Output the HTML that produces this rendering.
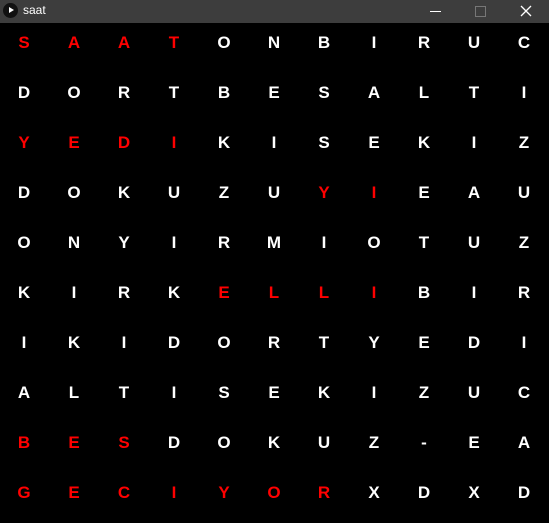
<!DOCTYPE html>
<html><head><style>
body{margin:0;width:549px;height:523px;background:#000;overflow:hidden;font-family:"Liberation Sans",sans-serif;position:relative}
.tb{position:absolute;left:0;top:0;width:549px;height:23px;background:#3d3d3d;color:#fff;font-size:12px}
.g{position:absolute;left:-1px;top:18px}
.r{display:flex;height:50px}
.r span{width:50px;text-align:center;line-height:50px;font-size:17px;font-weight:bold;color:#fff}
.r span.x{color:#f00}
</style></head><body>
<div class="tb">
<div style="position:absolute;left:3px;top:3px;width:15px;height:15px;border-radius:50%;background:#111"></div>
<div style="position:absolute;left:9px;top:7px;width:0;height:0;border-left:5px solid #fff;border-top:3.5px solid transparent;border-bottom:3.5px solid transparent"></div>
<div style="position:absolute;left:23px;top:3px">saat</div>
<div style="position:absolute;left:430px;top:11px;width:11px;height:1px;background:#fff"></div>
<div style="position:absolute;left:475px;top:6px;width:9px;height:9px;border:1px solid #777"></div>
<svg style="position:absolute;left:520px;top:5px" width="12" height="12"><path d="M1 1L11 11M11 1L1 11" stroke="#fff" stroke-width="1.3"/></svg>
</div>
<div class="g">
<div class="r"><span class="x">S</span><span class="x">A</span><span class="x">A</span><span class="x">T</span><span>O</span><span>N</span><span>B</span><span>I</span><span>R</span><span>U</span><span>C</span></div>
<div class="r"><span>D</span><span>O</span><span>R</span><span>T</span><span>B</span><span>E</span><span>S</span><span>A</span><span>L</span><span>T</span><span>I</span></div>
<div class="r"><span class="x">Y</span><span class="x">E</span><span class="x">D</span><span class="x">I</span><span>K</span><span>I</span><span>S</span><span>E</span><span>K</span><span>I</span><span>Z</span></div>
<div class="r"><span>D</span><span>O</span><span>K</span><span>U</span><span>Z</span><span>U</span><span class="x">Y</span><span class="x">I</span><span>E</span><span>A</span><span>U</span></div>
<div class="r"><span>O</span><span>N</span><span>Y</span><span>I</span><span>R</span><span>M</span><span>I</span><span>O</span><span>T</span><span>U</span><span>Z</span></div>
<div class="r"><span>K</span><span>I</span><span>R</span><span>K</span><span class="x">E</span><span class="x">L</span><span class="x">L</span><span class="x">I</span><span>B</span><span>I</span><span>R</span></div>
<div class="r"><span>I</span><span>K</span><span>I</span><span>D</span><span>O</span><span>R</span><span>T</span><span>Y</span><span>E</span><span>D</span><span>I</span></div>
<div class="r"><span>A</span><span>L</span><span>T</span><span>I</span><span>S</span><span>E</span><span>K</span><span>I</span><span>Z</span><span>U</span><span>C</span></div>
<div class="r"><span class="x">B</span><span class="x">E</span><span class="x">S</span><span>D</span><span>O</span><span>K</span><span>U</span><span>Z</span><span>-</span><span>E</span><span>A</span></div>
<div class="r"><span class="x">G</span><span class="x">E</span><span class="x">C</span><span class="x">I</span><span class="x">Y</span><span class="x">O</span><span class="x">R</span><span>X</span><span>D</span><span>X</span><span>D</span></div>
</div>
</body></html>
